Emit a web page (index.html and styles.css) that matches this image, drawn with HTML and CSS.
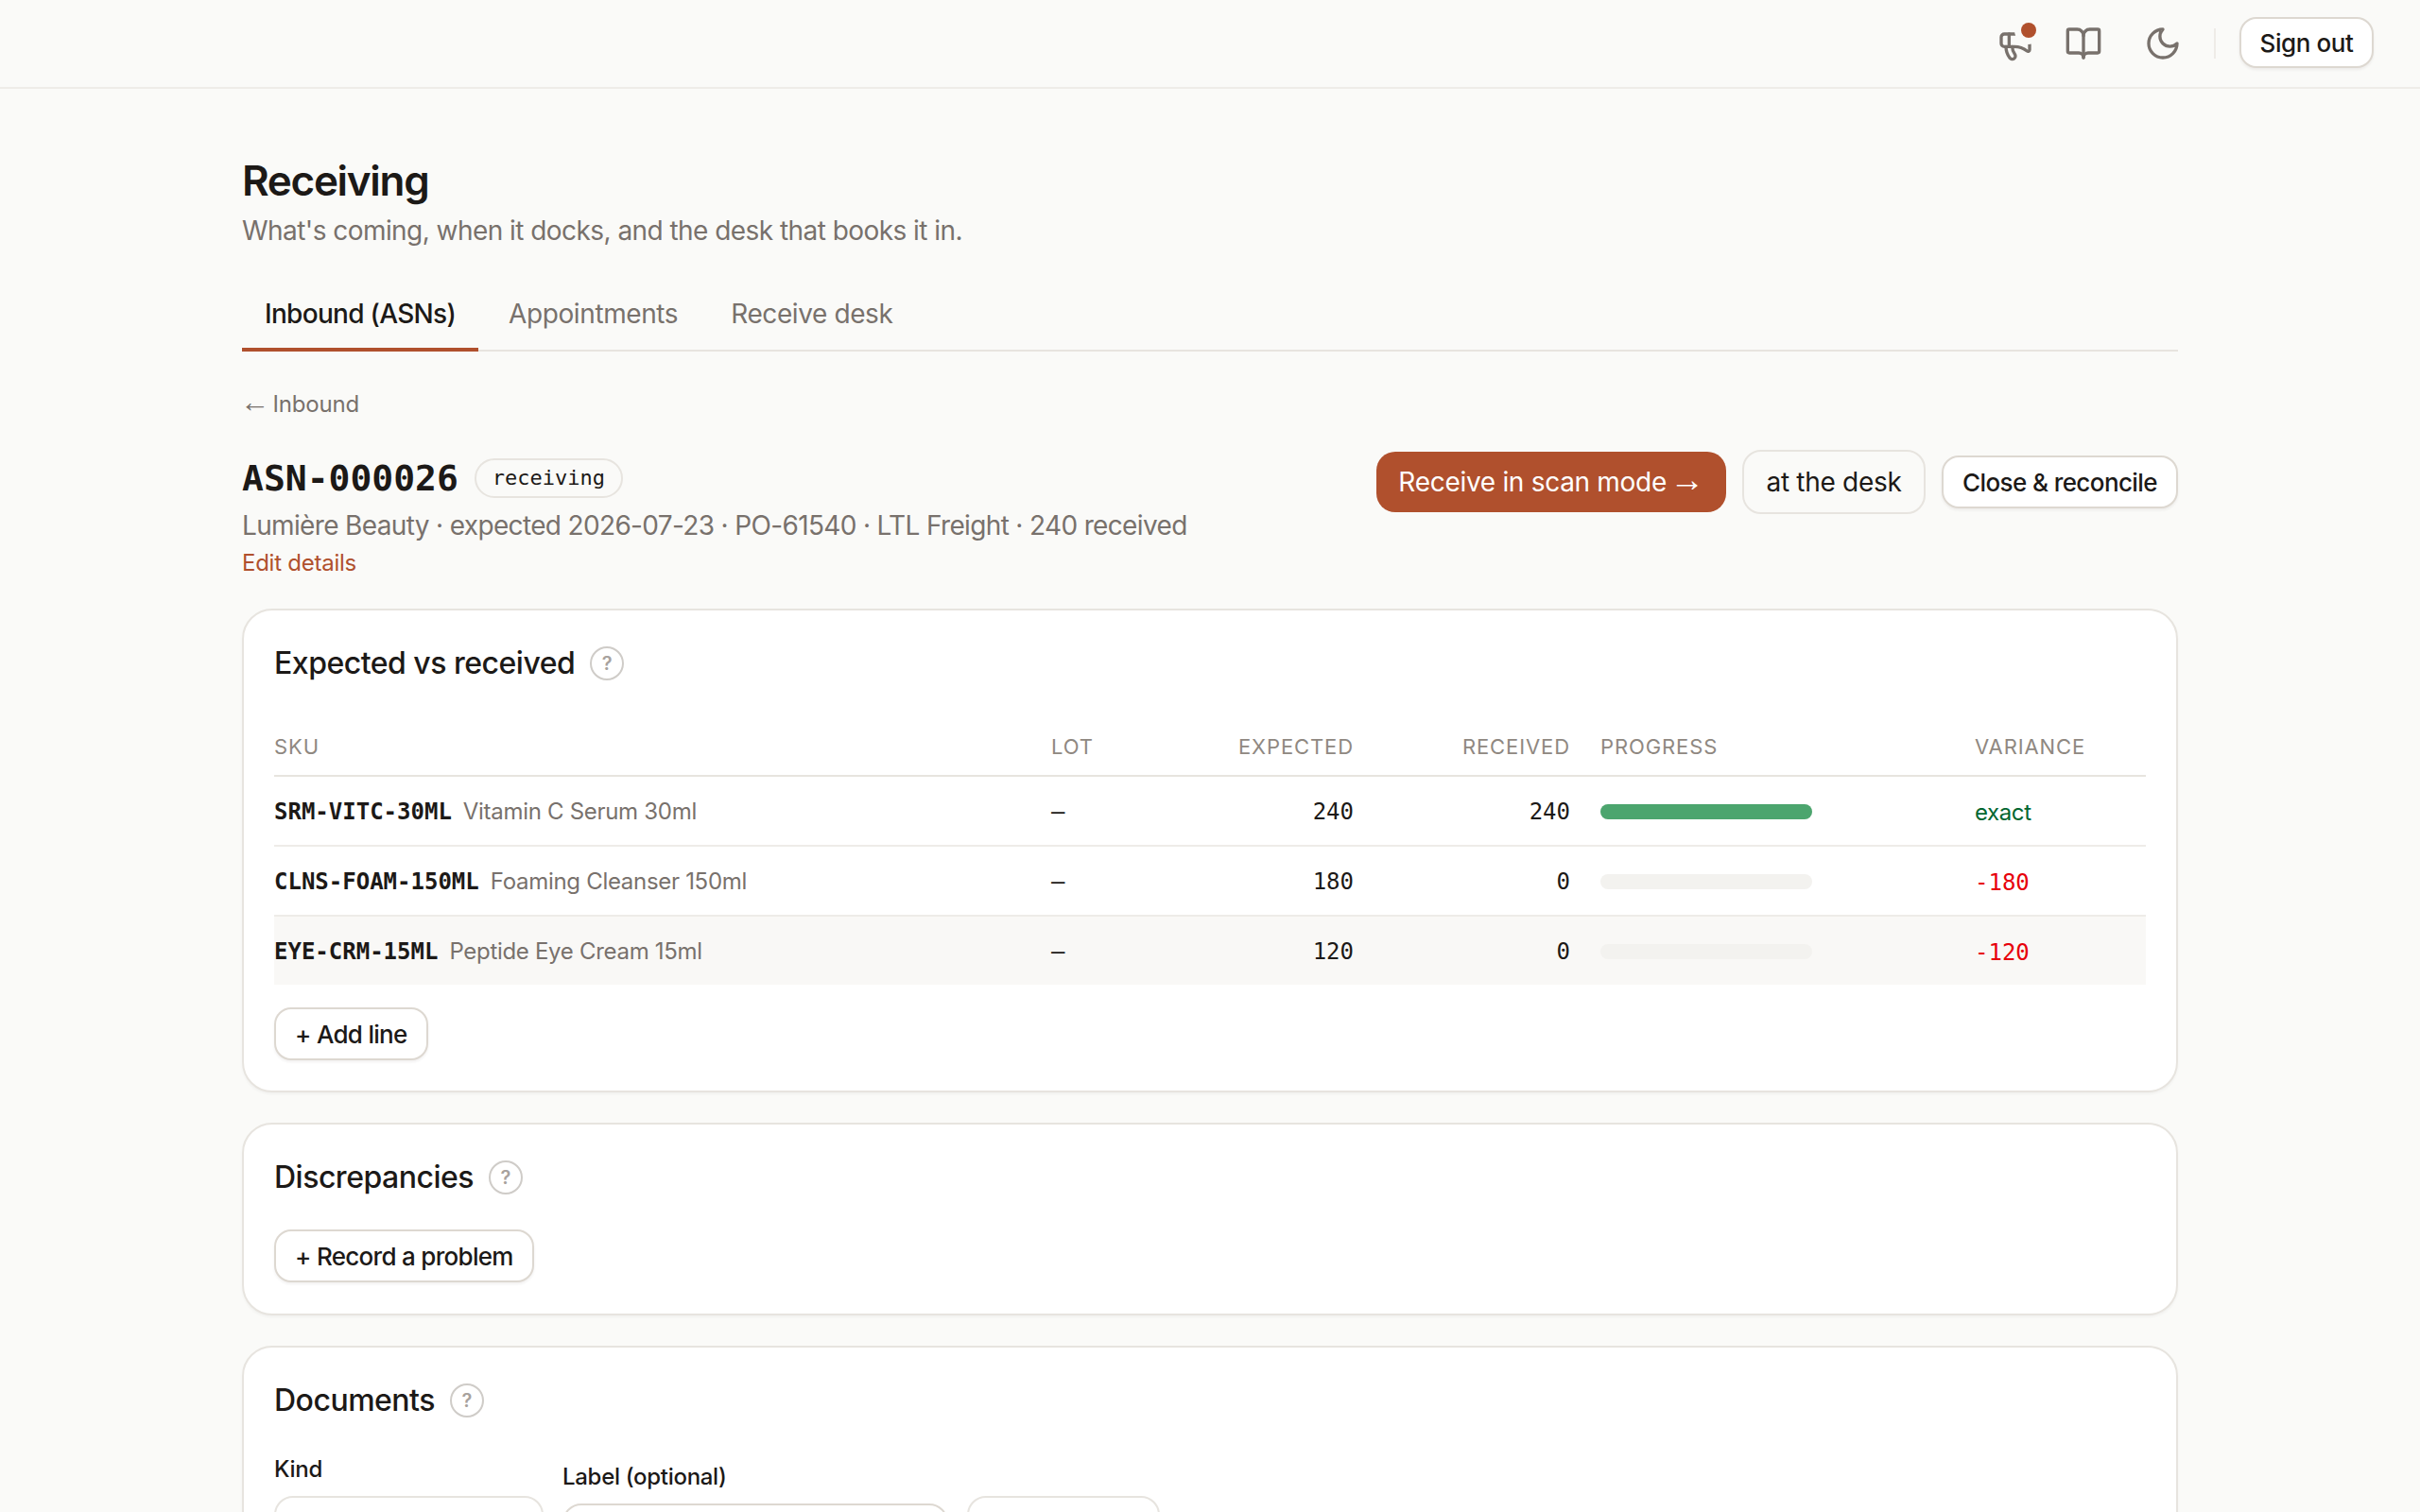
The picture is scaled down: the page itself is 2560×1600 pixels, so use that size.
FILE: index.html
```html
<!DOCTYPE html>
<html lang="en">
  <head>
    <meta charset="UTF-8" />
    <meta name="viewport" content="width=device-width, initial-scale=1.0" />
    <title>Receiving</title>

    <link rel="stylesheet" href="styles.css">
  </head>

  <body>
    <header class="topbar">
      <span class="icon icon--news">
        <svg viewBox="0 0 24 24"><path d="M11 6a13 13 0 0 0 8.400-2.800A1 1 0 0 1 21 4v12a1 1 0 0 1-1.600.8A13 13 0 0 0 11 14H5a2 2 0 0 1-2-2V8a2 2 0 0 1 2-2z"/><path d="M6 14a12 12 0 0 0 2.400 7.200 2 2 0 0 0 3.200-2.400A8 8 0 0 1 10 14"/><path d="M8 6v8"/></svg>
        <i class="icon__dot"></i>
      </span>
      <span class="icon icon--book">
        <svg viewBox="0 0 24 24"><path d="M12 7v14"/><path d="M3 18a1 1 0 0 1-1-1V4a1 1 0 0 1 1-1h5a4 4 0 0 1 4 4 4 4 0 0 1 4-4h5a1 1 0 0 1 1 1v13a1 1 0 0 1-1 1h-6a3 3 0 0 0-3 3 3 3 0 0 0-3-3z"/></svg>
      </span>
      <span class="icon icon--moon">
        <svg viewBox="0 0 24 24"><path d="M12 3a6 6 0 0 0 9 9 9 9 0 1 1-9-9Z"/></svg>
      </span>
      <span class="topbar__divider"></span>
      <button class="btn btn--signout">Sign out</button>
    </header>

    <main class="page">
      <h1 class="page__title">Receiving</h1>
      <p class="page__sub">What's coming, when it docks, and the desk that books it in.</p>

      <nav class="tabs">
        <a class="tab tab--active">Inbound (ASNs)</a>
        <a class="tab">Appointments</a>
        <a class="tab">Receive desk</a>
      </nav>

      <a class="backlink"><span class="arrow arrow--back">←</span> Inbound</a>

      <section class="asn">
        <div class="asn__info">
          <div class="asn__heading">
            <h2 class="asn__id">ASN-000026</h2>
            <span class="badge">receiving</span>
          </div>
          <p class="asn__meta">Lumière Beauty · expected 2026-07-23 · PO-61540 · LTL Freight · 240 received</p>
          <a class="asn__edit">Edit details</a>
        </div>
        <div class="asn__actions">
          <button class="btn btn--primary">Receive in scan mode <span class="arrow arrow--next">→</span></button>
          <button class="btn btn--ghost">at the desk</button>
          <button class="btn btn--close">Close &amp; reconcile</button>
        </div>
      </section>

      <section class="card">
        <h3 class="card__title">Expected vs received <span class="help">?</span></h3>
        <table class="lines">
          <thead>
            <tr>
              <th class="col-sku">SKU</th>
              <th class="col-lot">Lot</th>
              <th class="col-num">Expected</th>
              <th class="col-num">Received</th>
              <th class="col-progress">Progress</th>
              <th class="col-var">Variance</th>
            </tr>
          </thead>
          <tbody>
            <tr>
              <td><b class="sku">SRM-VITC-30ML</b><span class="sku__name">Vitamin C Serum 30ml</span></td>
              <td class="mono">—</td>
              <td class="mono num">240</td>
              <td class="mono num">240</td>
              <td><div class="bar"><div class="bar__fill" style="width: 100%"></div></div></td>
              <td class="var var--ok">exact</td>
            </tr>
            <tr>
              <td><b class="sku">CLNS-FOAM-150ML</b><span class="sku__name">Foaming Cleanser 150ml</span></td>
              <td class="mono">—</td>
              <td class="mono num">180</td>
              <td class="mono num">0</td>
              <td><div class="bar"></div></td>
              <td class="mono var var--bad">-180</td>
            </tr>
            <tr class="is-hover">
              <td><b class="sku">EYE-CRM-15ML</b><span class="sku__name">Peptide Eye Cream 15ml</span></td>
              <td class="mono">—</td>
              <td class="mono num">120</td>
              <td class="mono num">0</td>
              <td><div class="bar"></div></td>
              <td class="mono var var--bad">-120</td>
            </tr>
          </tbody>
        </table>
        <button class="btn btn--add">+ Add line</button>
      </section>

      <section class="card card--problems">
        <h3 class="card__title">Discrepancies <span class="help">?</span></h3>
        <button class="btn btn--problem">+ Record a problem</button>
      </section>

      <section class="card card--docs">
        <h3 class="card__title">Documents <span class="help">?</span></h3>
        <form class="docform">
          <label class="field field--kind">Kind<span class="box box--tall"></span></label>
          <label class="field field--label">Label (optional)<span class="box box--input"></span></label>
          <span class="box box--file"></span>
        </form>
      </section>
    </main>
  </body>
</html>
```

FILE: styles.css
```css
* {
  margin: 0;
  padding: 0;
  box-sizing: border-box;
}

html,
body {
  height: 100%;
  overflow: hidden;
}

body {
  background: #fafaf8;
  color: #1c1917;
  font-family: Inter, "Liberation Sans", sans-serif;
  font-size: 28px;
}

.arrow {
  font-family: "Liberation Sans", sans-serif;
  font-size: 1.3em;
  font-weight: 400;
  line-height: 0;
}

.arrow--back {
  margin-left: -2px;
  margin-right: -3px;
}

.arrow--next {
  margin-left: -4px;
}

/* top bar */

.topbar {
  display: flex;
  align-items: center;
  justify-content: flex-end;
  height: 94px;
  padding-right: 49px;
  border-bottom: 2px solid #eeece8;
}

.icon {
  position: relative;
  width: 40px;
  height: 40px;
  color: #78716c;
}

.icon svg {
  display: block;
  width: 40px;
  height: 40px;
  fill: none;
  stroke: currentColor;
  stroke-width: 2;
  stroke-linecap: round;
  stroke-linejoin: round;
}

.icon--news {
  margin-right: 32px;
}

.icon--book {
  margin-right: 44px;
}

.icon__dot {
  position: absolute;
  top: -2px;
  left: 26px;
  width: 16px;
  height: 16px;
  border-radius: 50%;
  background: #b0502d;
  box-shadow: 0 0 0 7px #fafaf8;
}

.topbar__divider {
  width: 2px;
  height: 32px;
  margin: 0 25px 0 34px;
  background: #eeece8;
}

.btn {
  height: 56px;
  padding: 0 20px;
  border: 2px solid #ddd8d1;
  border-radius: 18px;
  background: #fff;
  box-shadow: 0 2px 3px rgba(28, 25, 23, 0.06);
  color: #1c1917;
  font-family: inherit;
  font-size: 26px;
  font-weight: 500;
  letter-spacing: -0.7px;
}

.btn--signout {
  width: 142px;
  height: 54px;
  margin-bottom: 2px;
  padding: 0;
  letter-spacing: -0.4px;
}

/* page head */

.page {
  width: 2048px;
  margin: 0 auto;
  padding-top: 68px;
}

.page__title {
  font-size: 44px;
  font-weight: 600;
  line-height: 58px;
  letter-spacing: -1.3px;
}

.page__sub {
  margin-top: 4px;
  color: #78716c;
  font-size: 28px;
  line-height: 40px;
  letter-spacing: -0.55px;
}

.tabs {
  display: flex;
  gap: 8px;
  margin-top: 36px;
  border-bottom: 2px solid #e7e4df;
}

.tab {
  height: 72px;
  margin-bottom: -2px;
  padding: 0 24px;
  color: #78716c;
  font-size: 28px;
  line-height: 64px;
  letter-spacing: -0.4px;
}

.tab--active {
  border-bottom: 4px solid #b0502d;
  color: #1c1917;
  font-weight: 500;
  letter-spacing: -0.7px;
}

.backlink {
  display: block;
  margin-top: 40px;
  color: #78716c;
  font-size: 24px;
  line-height: 32px;
  letter-spacing: -0.2px;
}

/* asn head */

.asn {
  display: flex;
  justify-content: space-between;
  margin-top: 32px;
}

.asn__info {
  padding-top: 6px;
}

.asn__heading {
  display: flex;
  align-items: center;
  gap: 17px;
}

.asn__id {
  font-family: "DejaVu Sans Mono", monospace;
  font-size: 38px;
  font-weight: 700;
  line-height: 48px;
}

.badge {
  padding: 0 17px;
  border: 2px solid #e7e4df;
  border-radius: 21px;
  font-family: "DejaVu Sans Mono", monospace;
  font-size: 22px;
  line-height: 38px;
}

.asn__meta {
  margin-top: 6px;
  color: #78716c;
  font-size: 28px;
  line-height: 40px;
  letter-spacing: -0.65px;
}

.asn__edit {
  display: block;
  color: #b0502d;
  font-size: 24px;
  line-height: 40px;
  letter-spacing: -0.25px;
}

.asn__actions {
  display: flex;
  align-items: center;
  gap: 17px;
  height: 68px;
}

.btn--primary {
  width: 370px;
  height: 64px;
  border: 0;
  border-radius: 20px;
  background: #b0502d;
  box-shadow: none;
  color: #fff;
  font-size: 28px;
  font-weight: 400;
  letter-spacing: -0.3px;
}

.btn--ghost {
  width: 194px;
  height: 68px;
  border-color: #e7e4df;
  border-radius: 20px;
  background: transparent;
  box-shadow: none;
  font-size: 28px;
  font-weight: 400;
  letter-spacing: -0.3px;
}

.btn--close {
  width: 250px;
  padding: 0;
  letter-spacing: -0.6px;
}

/* cards */

.card {
  margin-top: 32px;
  padding: 34px 32px 32px;
  border: 2px solid #e7e4df;
  border-radius: 32px;
  background: #fff;
  box-shadow: 0 2px 3px rgba(28, 25, 23, 0.04);
}

.asn + .card {
  margin-top: 28px;
}

.card--problems {
  padding-bottom: 33px;
}

.card__title {
  display: flex;
  align-items: center;
  gap: 16px;
  font-size: 32px;
  font-weight: 500;
  line-height: 44px;
  letter-spacing: -0.5px;
}

.help {
  display: flex;
  align-items: center;
  justify-content: center;
  width: 36px;
  height: 36px;
  border: 2px solid #cfccc8;
  border-radius: 50%;
  color: #a8a29e;
  font-size: 20px;
  font-weight: 600;
  letter-spacing: 0;
}

/* table */

.lines {
  width: 100%;
  margin-top: 35px;
  border-collapse: collapse;
  table-layout: fixed;
}

.lines th {
  height: 62px;
  padding: 0 16px;
  border-bottom: 2px solid #e7e4df;
  color: #8f8881;
  font-size: 22px;
  font-weight: 400;
  letter-spacing: 0.9px;
  text-align: left;
  text-transform: uppercase;
}

.lines td {
  height: 74px;
  padding: 1px 16px 0;
  border-bottom: 2px solid #eeece8;
  font-size: 24px;
}

.lines tr:last-child td {
  height: 73px;
  border-bottom: 0;
}

.lines th:first-child,
.lines td:first-child {
  padding-left: 0;
}

.col-sku {
  width: 806px;
}

.col-lot {
  width: 123px;
}

.lines th.col-num {
  width: 229px;
  text-align: right;
}

.col-progress {
  width: 396px;
}

.mono {
  font-family: "DejaVu Sans Mono", monospace;
}

.lines .num {
  text-align: right;
}

.lines .var {
  padding-top: 3px;
}

.sku {
  font-family: "DejaVu Sans Mono", monospace;
  font-size: 24px;
  font-weight: 700;
}

.sku__name {
  margin-left: 12px;
  color: #78716c;
  font-size: 24px;
  letter-spacing: -0.3px;
}

.is-hover td {
  background: #f9f8f6;
}

.bar {
  width: 224px;
  height: 16px;
  border-radius: 8px;
  background: #f3f2ef;
}

.bar__fill {
  height: 100%;
  border-radius: 8px;
  background: #4ca56e;
}

.var--ok {
  color: #016630;
  letter-spacing: -0.4px;
}

.var--bad {
  color: #e7000b;
}

.btn--add {
  display: block;
  margin-top: 24px;
}

.btn--problem {
  display: block;
  margin-top: 33px;
}

/* documents form */

.docform {
  display: flex;
  align-items: flex-end;
  gap: 20px;
  margin-top: 33px;
}

.field {
  display: block;
  font-size: 24px;
  font-weight: 500;
  line-height: 36px;
  letter-spacing: -0.3px;
}

.box {
  display: block;
  border: 2px solid #e7e4df;
  border-radius: 20px;
}

.field--kind .box {
  width: 285px;
  height: 68px;
  margin-top: 10px;
}

.field--label .box {
  width: 408px;
  height: 60px;
  margin-top: 10px;
  border-color: #ddd8d1;
}

.box--file {
  width: 204px;
  height: 68px;
}
```
